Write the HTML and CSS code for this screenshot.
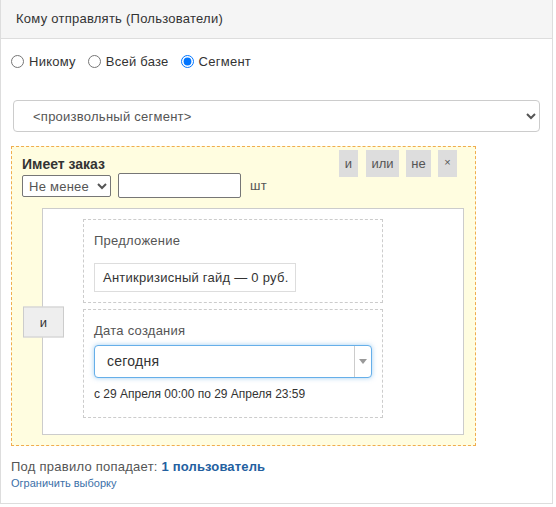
FILE: index.html
```html
<!DOCTYPE html>
<html lang="ru">
<head>
<meta charset="utf-8">
<title>Кому отправлять</title>
<link rel="stylesheet" href="styles.css">
</head>
<body>
<div class="panel">
  <div class="panel-head">Кому отправлять (Пользователи)</div>
  <div class="panel-body">
    <div class="radios">
      <label class="radio"><input type="radio" name="to"><span>Никому</span></label>
      <label class="radio"><input type="radio" name="to"><span>Всей базе</span></label>
      <label class="radio"><input type="radio" name="to" checked><span>Сегмент</span></label>
    </div>
    <select class="seg-select"><option>&lt;произвольный сегмент&gt;</option></select>

    <div class="rule">
      <div class="rule-title">Имеет заказ</div>
      <div class="ops">
        <span class="op op-and">и</span>
        <span class="op op-or">или</span>
        <span class="op op-not">не</span>
        <span class="op op-x">×</span>
      </div>
      <div class="rule-controls">
        <select class="cmp"><option>Не менее</option></select>
        <input class="qty" type="text">
        <span class="unit">шт</span>
      </div>

      <div class="group">
        <span class="group-op">и</span>
        <div class="cond cond-offer">
          <div class="cond-label">Предложение</div>
          <div class="offer">Антикризисный гайд — 0 руб.</div>
        </div>
        <div class="cond cond-date">
          <div class="cond-label">Дата создания</div>
          <div class="date-select">
            <span class="date-value">сегодня</span>
            <span class="date-arrow"><span class="tri"></span></span>
          </div>
          <div class="date-range">с 29 Апреля 00:00 по 29 Апреля 23:59</div>
        </div>
      </div>
    </div>

    <div class="summary">Под правило попадает: <b class="count">1 пользователь</b></div>
    <a class="limit" href="#">Ограничить выборку</a>
  </div>
</div>
</body>
</html>
```

FILE: styles.css
```css
* { box-sizing: border-box; }
html, body { margin: 0; padding: 0; background: #fff; }
body {
  font-family: "Liberation Sans", Arial, sans-serif;
  font-size: 13px;
  letter-spacing: 0.25px;
  color: #333;
}
.panel {
  width: 553px;
  border: 1px solid #ddd;
  border-top: none;
}
.panel-head {
  height: 39px;
  background: #f5f5f5;
  border-bottom: 1px solid #ddd;
  padding-left: 15px;
  line-height: 37px;
  font-size: 13px;
  color: #333;
}
.panel-body {
  padding: 14px 11px 13px 10px;
}
.radios {
  display: flex;
  align-items: center;
  gap: 12px;
  height: 16px;
}
.radio {
  display: flex;
  align-items: center;
  gap: 5px;
  color: #333;
}
.radio input {
  margin: 0;
  width: 13px;
  height: 13px;
}
.seg-select {
  display: block;
  margin: 31px 0 0 2px;
  width: 527px;
  height: 32px;
  padding: 0 12px 0 15px;
  border: 1px solid #ccc;
  border-radius: 4px;
  background: #fff;
  font-family: inherit;
  font-size: 13px;
  letter-spacing: 0.25px;
  color: #555;
}
.rule {
  margin-top: 14px;
  width: 465px;
  background: #fffde0;
  border: 1px dashed #f0ad4e;
  padding: 3px 11px 10px 10px;
  display: grid;
  grid-template-columns: 1fr auto;
}
.rule-title {
  grid-column: 1;
  grid-row: 1;
  font-weight: bold;
  font-size: 14px;
  letter-spacing: 0;
  line-height: 16px;
  margin-top: 6px;
  color: #333;
}
.ops {
  grid-column: 2;
  grid-row: 1 / span 2;
  align-self: start;
  display: flex;
  gap: 7px;
  margin-right: 7px;
}
.op {
  display: block;
  height: 27px;
  line-height: 27px;
  text-align: center;
  background: #ddd;
  color: #555;
  font-size: 13px;
  letter-spacing: 0;
}
.op-and { width: 19px; margin-right: 1px; }
.op-or { width: 33px; }
.op-not { width: 25px; }
.op-x { width: 19px; font-size: 11px; line-height: 25px; }
.rule-controls {
  grid-column: 1;
  grid-row: 2;
  display: flex;
  align-items: center;
  margin-top: 1px;
}
.cmp {
  width: 89px;
  height: 22px;
  margin-top: 1px;
  border: 1px solid #767676;
  border-radius: 2px;
  background: #fff;
  font-family: inherit;
  font-size: 13px;
  letter-spacing: 0.25px;
  color: #555;
  padding: 0 2px;
}
.qty {
  width: 123px;
  height: 25px;
  margin-left: 7px;
  border: 1px solid #767676;
  border-radius: 2px;
  background: #fff;
}
.unit {
  margin-left: 9px;
  color: #555;
  font-size: 13px;
}
.group {
  grid-column: 1 / span 2;
  grid-row: 3;
  position: relative;
  margin: 10px 0 0 20px;
  background: #fff;
  border: 1px solid #ccc;
  padding: 10px 0 10px 40px;
}
.group-op {
  position: absolute;
  left: -20px;
  top: 50%;
  transform: translateY(-50%);
  width: 41px;
  height: 31px;
  line-height: 29px;
  text-align: center;
  background: #eee;
  border: 1px solid #ccc;
  color: #333;
  font-size: 13px;
}
.cond {
  width: 300px;
  border: 1px dashed #ccc;
  padding: 12px 10px 10px;
  margin-bottom: 6px;
}
.cond-label {
  line-height: 18px;
  color: #555;
  font-size: 13px;
}
.cond-offer .cond-label { margin-bottom: 13px; }
.offer {
  display: inline-block;
  height: 29px;
  line-height: 27px;
  padding: 0 6px 0 8px;
  border: 1px solid #ddd;
  color: #333;
  font-size: 13px;
}
.cond-date { padding-bottom: 15px; }
.cond-date .cond-label { margin-bottom: 5px; }
.date-select {
  display: flex;
  width: 278px;
  height: 33px;
  border: 1px solid #66afe9;
  border-radius: 4px;
  box-shadow: 0 0 5px rgba(102, 175, 233, 0.6);
  background: #fff;
}
.date-value {
  flex: 1;
  padding-left: 12px;
  line-height: 31px;
  font-size: 14px;
  color: #333;
}
.date-arrow {
  width: 17px;
  border-left: 1px solid #ccc;
  display: flex;
  align-items: center;
  justify-content: center;
}
.tri {
  width: 0;
  height: 0;
  border-left: 4px solid transparent;
  border-right: 4px solid transparent;
  border-top: 5px solid #999;
}
.date-range {
  margin-top: 9px;
  font-size: 12px;
  letter-spacing: 0;
  line-height: 15px;
  color: #333;
}
.summary {
  margin-top: 12px;
  line-height: 18px;
  color: #555;
  font-size: 13px;
}
.count { color: #23609f; letter-spacing: 0.15px; }
.limit {
  display: block;
  font-size: 11px;
  letter-spacing: 0;
  line-height: 14px;
  color: #3c70a8;
  text-decoration: none;
}
```
